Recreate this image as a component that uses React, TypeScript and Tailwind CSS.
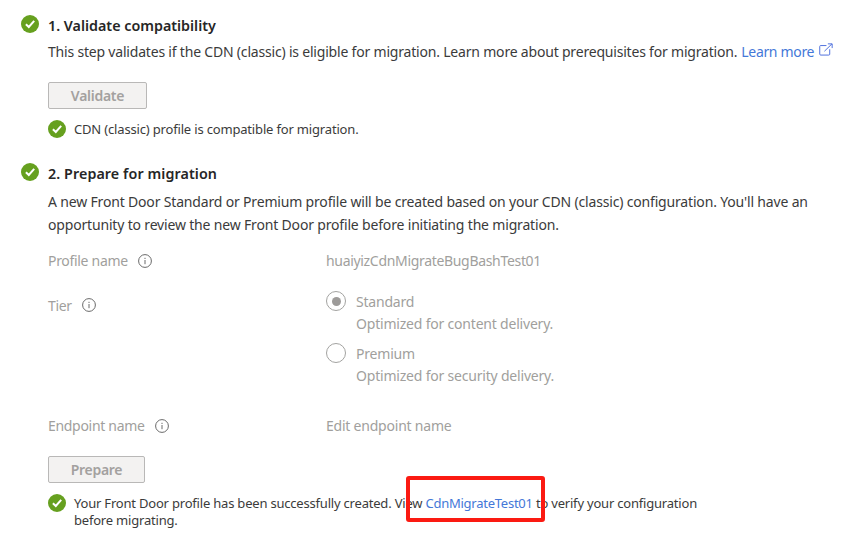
import type { ReactNode } from "react";

function Check() {
  return (
    <svg viewBox="0 0 18 18" className="size-[18px] shrink-0">
      <circle cx="9" cy="9" r="9" fill="#66a01f" />
      <path d="M4.9 9.2 7.8 12 13.2 5.9" fill="none" stroke="#fff" strokeWidth="2" />
    </svg>
  );
}

function Info() {
  return (
    <svg viewBox="0 0 14 14" className="size-[14px] shrink-0">
      <circle cx="7" cy="7" r="6.4" fill="none" stroke="#6a6a6a" strokeWidth="1" />
      <path d="M7 6v4.2M7 3.8v1.2" stroke="#6a6a6a" strokeWidth="1" />
    </svg>
  );
}

function ExternalLink() {
  return (
    <svg viewBox="0 0 15 14" className="h-[13.5px] w-[14px] shrink-0" fill="none" stroke="#4668dc" strokeWidth="1">
      <path d="M8 2.5H1.8Q.8 2.5.8 3.5v8.2q0 1 1 1h8.7q1 0 1-1V6.5M5.8 8.6 13.8.8M9.5.7h4.6v4.5" />
    </svg>
  );
}

function StepHeading({ children }: { children: ReactNode }) {
  return (
    <div className="flex h-5 items-start gap-[9px]">
      <Check />
      <h2 className="pt-px text-[14.3px] leading-5 font-semibold whitespace-nowrap text-[#262626]">{children}</h2>
    </div>
  );
}

function Label({ children }: { children: ReactNode }) {
  return (
    <div className="flex h-5 w-[278px] shrink-0 items-center gap-[10px]">
      <span className="tracking-[-0.31px]">{children}</span>
      <Info />
    </div>
  );
}

function Option({ title, note, checked }: { title: string; note: string; checked?: boolean }) {
  return (
    <div className="flex gap-[10px]">
      <span className="flex size-5 shrink-0 items-center justify-center rounded-full border border-[#a3a3a1]">
        {checked && <span className="size-[9px] rounded-full bg-[#9d9b99]" />}
      </span>
      <div className="leading-[21.5px] tracking-[-0.2px] whitespace-nowrap">
        <div>{title}</div>
        <div>{note}</div>
      </div>
    </div>
  );
}

export default function App() {
  return (
    <main className="h-[538px] w-[855px] overflow-hidden bg-white pt-[15px] pl-[21px] font-['Noto_Sans',sans-serif] text-[14px] text-[#3b3b3b]">
      <StepHeading>1. Validate compatibility</StepHeading>
      <section className="pl-[27px]">
        <p className="mt-[5px] flex leading-[23px] whitespace-nowrap">
          <span className="tracking-[-0.195px]">This step validates if the CDN (classic) is eligible for migration. Learn more about prerequisites for migration.</span>
          <a className="ml-1 flex gap-[5px] tracking-[-0.33px] text-[#4478d8]">
            Learn more
            <span className="pt-[3px]"><ExternalLink /></span>
          </a>
        </p>
        <button className="mt-[19px] flex h-[27px] w-[99px] items-center justify-center rounded-[2px] border border-[#b9b8b7] bg-[#f3f2f1] font-semibold tracking-[-0.28px] text-[#a3a19f]">
          Validate
        </button>
        <div className="mt-[11px] flex gap-2 text-[13px]">
          <Check />
          <p className="pt-px leading-[17px] tracking-[-0.17px] whitespace-nowrap">CDN (classic) profile is compatible for migration.</p>
        </div>
      </section>

      <div className="mt-[25px] tracking-[0.08px]">
        <StepHeading>2. Prepare for migration</StepHeading>
      </div>
      <section className="pl-[27px]">
        <p className="mt-[7px] leading-[23px] tracking-[-0.172px] whitespace-nowrap">
          <span>A new Front Door Standard or Premium profile will be created based on your CDN (classic) configuration. You'll have an</span>
          <br />
          <span>opportunity to review the new Front Door profile before initiating the migration.</span>
        </p>
        <div className="text-[#a19f9d]">
          <div className="mt-[15px] flex leading-5">
            <Label>Profile name</Label>
            <span className="tracking-[-0.32px]">huaiyizCdnMigrateBugBashTest01</span>
          </div>
          <div className="mt-5 flex">
            <div className="pt-1">
              <Label>Tier</Label>
            </div>
            <div className="flex flex-col gap-[9px]">
              <Option title="Standard" note="Optimized for content delivery." checked />
              <Option title="Premium" note="Optimized for security delivery." />
            </div>
          </div>
          <div className="mt-[30px] flex leading-5">
            <Label>Endpoint name</Label>
            <span className="tracking-[-0.22px]">Edit endpoint name</span>
          </div>
        </div>
        <button className="mt-5 flex h-[27px] w-[97px] items-center justify-center rounded-[2px] border border-[#b9b8b7] bg-[#f3f2f1] font-semibold tracking-[-0.3px] text-[#a3a19f]">
          Prepare
        </button>
        <div className="mt-[11px] flex gap-2 text-[13px]">
          <Check />
          <p className="pt-px leading-[16.5px] tracking-[-0.2px] whitespace-nowrap">
            <span>Your Front Door profile has been successfully created. View </span>
            <a className="relative tracking-[-0.25px] text-[#4478d8]">
              CdnMigrateTest01
              <span className="absolute -top-[18px] -left-[19px] h-[46px] w-[139px] rounded-[3px] border-4 border-[#fb1a12]" />
            </a>
            <span> to verify your configuration</span>
            <br />
            <span>before migrating.</span>
          </p>
        </div>
      </section>
    </main>
  );
}
